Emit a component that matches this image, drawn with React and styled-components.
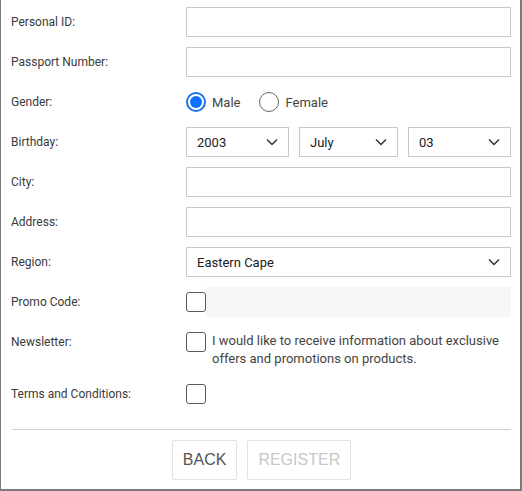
import React, { useState } from 'react'
import styled, { createGlobalStyle } from 'styled-components'

const Global = createGlobalStyle`
  html, body { margin: 0; padding: 0; background: #fff; }
  body { font-family: Roboto, "Liberation Sans", Arial, sans-serif; }
  * { box-sizing: border-box; }
`

const Frame = styled.div`
  width: 522px;
  height: 491px;
  border-left: 1px solid #7a7a7a;
  border-right: 2px solid #7a7a7a;
  border-bottom: 2px solid #7a7a7a;
  padding: 7px 9px 0 10px;
  background: #fff;
`

const Form = styled.div`
  display: flex;
  flex-direction: column;
  gap: 10px;
`

const Row = styled.div`
  display: grid;
  grid-template-columns: 175px 1fr;
  align-items: ${p => (p.top ? 'start' : 'center')};
  min-height: 30px;
  padding-bottom: ${p => (p.top ? '1px' : '0')};
`

const Label = styled.div`
  font-size: 12px;
  color: #3a3a3a;
  padding-top: ${p => (p.top ? '8px' : '0')};
`

const Input = styled.input`
  height: 30px;
  width: 100%;
  border: 1px solid #c8c8c8;
  padding: 0 10px;
  font: inherit;
  font-size: 13px;
  outline: none;
  background: ${p => (p.disabled ? '#f7f7f7' : '#fff')};
  border-color: ${p => (p.disabled ? '#f7f7f7' : '#c8c8c8')};
`

const SelectGrid = styled.div`
  display: grid;
  grid-template-columns: 103px 99px 103px;
  gap: 10px;
`

const SelectBox = styled.div`
  height: 30px;
  border: 1px solid #c8c8c8;
  display: flex;
  align-items: center;
  justify-content: space-between;
  padding: 0 10px 0 10px;
  font-size: 13px;
  color: #222;
`

const Radios = styled.div`
  display: flex;
  align-items: center;
  gap: 19px;
  height: 30px;
`

const RadioItem = styled.label`
  display: flex;
  align-items: center;
  gap: 6px;
  font-size: 13px;
  color: #444;
  cursor: pointer;
`

const RadioCircle = styled.span`
  width: 20px;
  height: 20px;
  border-radius: 50%;
  border: ${p => (p.on ? '2px solid #1a73e8' : '1px solid #666')};
  display: flex;
  align-items: center;
  justify-content: center;
  &::after {
    content: '';
    width: 12px;
    height: 12px;
    border-radius: 50%;
    background: #0f6fff;
    display: ${p => (p.on ? 'block' : 'none')};
  }
`

const Check = styled.span`
  flex: none;
  width: 20px;
  height: 20px;
  border: 1px solid #5a5a5a;
  border-radius: 3px;
  background: #fff;
`

const CheckLine = styled.div`
  display: flex;
  align-items: ${p => (p.top ? 'flex-start' : 'center')};
  padding-top: ${p => (p.top ? '5px' : '0')};
`

const CheckText = styled.div`
  margin-left: 6px;
  font-size: 13px;
  line-height: 18px;
  color: #444;
`

const Divider = styled.div`
  height: 1px;
  background: #cfcfcf;
  margin: 20px 0 10px 1px;
`

const Buttons = styled.div`
  display: flex;
  justify-content: center;
  gap: 10px;
  padding-left: 1px;
`

const Button = styled.button`
  height: 40px;
  padding: 0 10px;
  background: #fff;
  border: 1px solid #e2e2e2;
  border-radius: 2px;
  font-family: "Liberation Sans", Arial, sans-serif;
  font-size: 16px;
  color: ${p => (p.disabled ? '#c8c8c8' : '#555')};
`

const Chevron = () => (
  <svg width="12" height="8" viewBox="0 0 12 8" fill="none">
    <path d="M1 1.5 L6 6.5 L11 1.5" stroke="#333" strokeWidth="1.5" />
  </svg>
)

const Select = ({ value }) => (
  <SelectBox>
    <span>{value}</span>
    <Chevron />
  </SelectBox>
)

export default function App() {
  const [gender, setGender] = useState('male')
  return (
    <Frame>
      <Global />
      <Form>
        <Row>
          <Label>Personal ID:</Label>
          <Input />
        </Row>
        <Row>
          <Label>Passport Number:</Label>
          <Input />
        </Row>
        <Row>
          <Label>Gender:</Label>
          <Radios>
            <RadioItem onClick={() => setGender('male')}>
              <RadioCircle on={gender === 'male' ? 1 : 0} />
              Male
            </RadioItem>
            <RadioItem onClick={() => setGender('female')}>
              <RadioCircle on={gender === 'female' ? 1 : 0} />
              Female
            </RadioItem>
          </Radios>
        </Row>
        <Row>
          <Label>Birthday:</Label>
          <SelectGrid>
            <Select value="2003" />
            <Select value="July" />
            <Select value="03" />
          </SelectGrid>
        </Row>
        <Row>
          <Label>City:</Label>
          <Input />
        </Row>
        <Row>
          <Label>Address:</Label>
          <Input />
        </Row>
        <Row>
          <Label>Region:</Label>
          <Select value="Eastern Cape" />
        </Row>
        <Row>
          <Label>Promo Code:</Label>
          <CheckLine>
            <Check />
            <Input disabled />
          </CheckLine>
        </Row>
        <Row top>
          <Label top>Newsletter:</Label>
          <CheckLine top>
            <Check />
            <CheckText>
              I would like to receive information about exclusive
              <br />
              offers and promotions on products.
            </CheckText>
          </CheckLine>
        </Row>
        <Row>
          <Label>Terms and Conditions:</Label>
          <CheckLine>
            <Check />
          </CheckLine>
        </Row>
      </Form>
      <Divider />
      <Buttons>
        <Button>BACK</Button>
        <Button disabled>REGISTER</Button>
      </Buttons>
    </Frame>
  )
}
